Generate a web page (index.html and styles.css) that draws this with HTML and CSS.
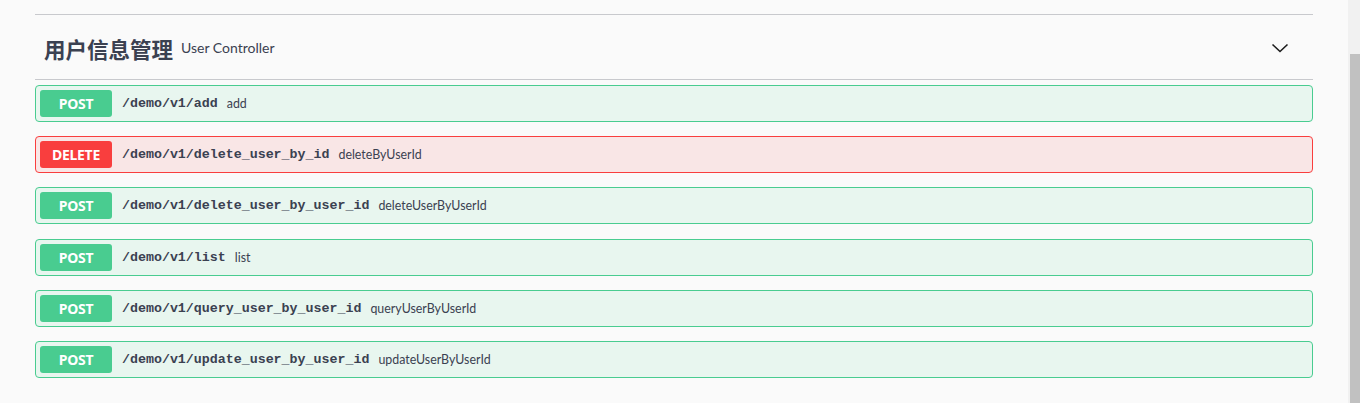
FILE: index.html
```html
<!DOCTYPE html>
<html lang="zh-CN">
<head>
<meta charset="utf-8">
<title>用户信息管理</title>
<link rel="stylesheet" href="styles.css">
</head>
<body>
<main class="page">
  <section class="tag-section">
    <header class="tag-header">
      <h4 class="tag-title">
        <span class="tag-name">用户信息管理</span>
        <small class="tag-desc">User Controller</small>
      </h4>
      <button class="expand" aria-label="collapse">
        <svg width="20" height="20" viewBox="0 0 20 20"><polyline points="2.5,5.5 10,12.5 17.5,5.5" fill="none" stroke="#1b1b1b" stroke-width="1.6"/></svg>
      </button>
    </header>
    <div class="ops">
      <div class="op op-post"><span class="method">POST</span><span class="path">/demo/v1/add</span><span class="desc">add</span></div>
      <div class="op op-delete"><span class="method">DELETE</span><span class="path">/demo/v1/delete_user_by_id</span><span class="desc">deleteByUserId</span></div>
      <div class="op op-post"><span class="method">POST</span><span class="path">/demo/v1/delete_user_by_user_id</span><span class="desc">deleteUserByUserId</span></div>
      <div class="op op-post"><span class="method">POST</span><span class="path">/demo/v1/list</span><span class="desc">list</span></div>
      <div class="op op-post"><span class="method">POST</span><span class="path">/demo/v1/query_user_by_user_id</span><span class="desc">queryUserByUserId</span></div>
      <div class="op op-post"><span class="method">POST</span><span class="path">/demo/v1/update_user_by_user_id</span><span class="desc">updateUserByUserId</span></div>
    </div>
  </section>
</main>
<div class="scrollbar"><div class="scroll-thumb"></div></div>
</body>
</html>
```

FILE: styles.css
```css
html, body {
  margin: 0;
  padding: 0;
  height: 100%;
  overflow: hidden;
  background: #fafafa;
}

body {
  font-family: Lato, "Noto Sans CJK SC", sans-serif;
  color: #3b4151;
}

.page {
  padding: 14px 47px 0 35px;
}

.tag-header {
  display: flex;
  align-items: center;
  justify-content: space-between;
  height: 64px;
  border-top: 1px solid #c8c9cd;
  border-bottom: 1px solid #c8c9cd;
  margin-bottom: 5px;
}

.tag-title {
  margin: 0;
  padding: 2px 0 0 9px;
  display: flex;
  align-items: center;
  font-weight: normal;
}

.tag-name {
  font-family: "Noto Sans CJK SC", sans-serif;
  font-size: 21.5px;
  font-weight: 700;
  color: #3b4151;
}

.tag-desc {
  margin: 0 0 1px 8px;
  font-family: Lato, "Noto Sans", sans-serif;
  font-size: 14px;
  color: #3b4151;
}

.expand {
  background: none;
  border: 0;
  padding: 0;
  margin: 4px 23px 0 0;
  width: 20px;
  height: 20px;
  display: flex;
}

.op {
  display: flex;
  align-items: center;
  height: 37px;
  box-sizing: border-box;
  padding: 0 4px;
  border: 1px solid #49cc90;
  border-radius: 4px;
  background: #e8f6ef;
  margin-bottom: 14.2px;
}

.op-delete {
  border-color: #f93e3e;
  background: #f9e6e6;
}

.method {
  width: 72px;
  height: 27px;
  flex: none;
  display: flex;
  align-items: center;
  justify-content: center;
  border-radius: 3px;
  background: #49cc90;
  color: #fff;
  font-family: "Noto Sans", sans-serif;
  font-weight: 700;
  font-size: 14px;
  letter-spacing: -0.3px;
}

.op-delete .method {
  background: #f93e3e;
}

.path {
  margin-left: 10px;
  font-family: "Liberation Mono", monospace;
  font-weight: 700;
  font-size: 13.3px;
  color: #3b4151;
}

.desc {
  margin-left: 9px;
  font-family: Lato, "Noto Sans", sans-serif;
  font-size: 12.4px;
  color: #3b4151;
}

.scrollbar {
  position: fixed;
  top: 0;
  right: 0;
  width: 12px;
  height: 100%;
  background: #f1f1f1;
}

.scroll-thumb {
  position: absolute;
  top: 54px;
  left: 2px;
  right: 0;
  bottom: 0;
  background: #c1c1c1;
}
```
